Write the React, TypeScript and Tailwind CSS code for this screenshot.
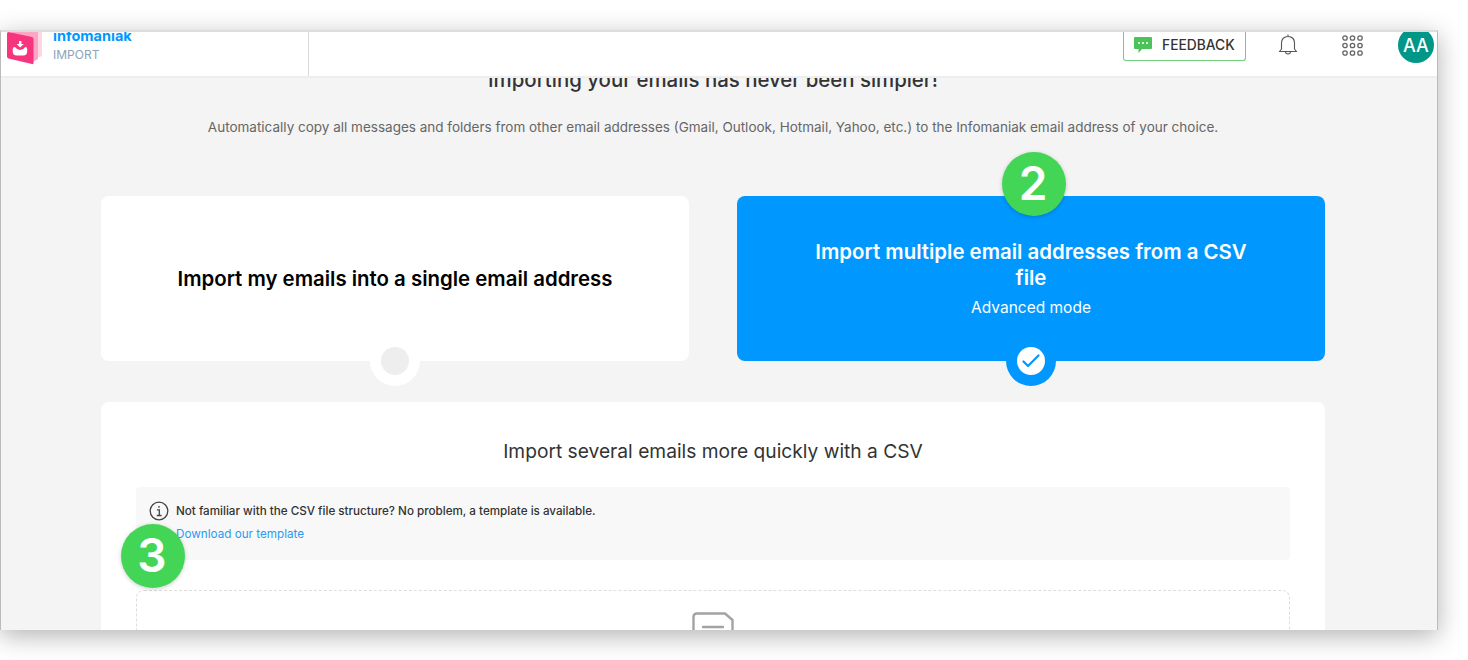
import React from "react";

function Logo() {
  return (
    <svg width="36" height="34" viewBox="0 0 36 34" className="block">
      <path d="M8 0 L35 0 L35 24 L27 27 Z" fill="#fdd8e4" />
      <path d="M4 0 L31 0 L31 27 L26 30 Z" fill="#fca6c3" />
      <path d="M1.500 0 L25 5 Q26.500 5.500 26.500 7 L26.500 31 Q26.500 32.500 25 32 L1.500 26.500 Q0 26 0 24.500 L0 1.500 Q0 0 1.500 0 Z" fill="#f7357f" />
      <path d="M12 9 h2.400 v3 h2.400 l-3.600 3.500 l-3.600 -3.500 h2.400 z" fill="#fff" />
      <path d="M8 15 q2 3 5.200 3 q3.200 0 5 -3 q2 0 2 2 v2 q0 4.500 -4 4.500 h-6.500 q-4 0 -4 -4.500 v-2 q0 -2 2.300 -2 z" fill="#fff" />
    </svg>
  );
}

function Bell() {
  return (
    <svg width="20" height="24" viewBox="0 0 20 24" fill="none" stroke="#555" strokeWidth="1.100" strokeLinejoin="round">
      <path d="M10 1.500 V3.500 M3.500 16 V10 C3.500 6 6 3.500 10 3.500 C14 3.500 16.500 6 16.500 10 V16 L18.500 18.500 H1.500 Z" />
      <path d="M7.500 18.500 C7.500 20.500 8.500 21 10 21 C11.500 21 12.500 20.500 12.500 18.500" />
    </svg>
  );
}

function Grid() {
  const dots = [3, 10.500, 18];
  return (
    <svg width="21" height="21" viewBox="0 0 21 21" fill="none" stroke="#666" strokeWidth="1.300">
      {dots.map((y) => dots.map((x) => <circle key={`${x}-${y}`} cx={x} cy={y} r="2.200" />))}
    </svg>
  );
}

function Chat() {
  return (
    <svg width="18" height="17" viewBox="0 0 18 17" className="block">
      <path d="M1 0 H17 Q18 0 18 1 V11 Q18 12 17 12 H8 L4.500 16 V12 H1 Q0 12 0 11 V1 Q0 0 1 0 Z" fill="#4cc25a" />
      <circle cx="5" cy="6" r="1" fill="#fff" />
      <circle cx="9" cy="6" r="1" fill="#fff" />
      <circle cx="13" cy="6" r="1" fill="#fff" />
    </svg>
  );
}

function Info() {
  return (
    <svg width="20" height="20" viewBox="0 0 20 20" fill="none" stroke="#444" className="block shrink-0">
      <circle cx="10" cy="10" r="8.800" strokeWidth="1.300" />
      <circle cx="10" cy="5.800" r="0.900" fill="#444" stroke="none" />
      <path d="M8 8.800 H10.300 V14.500 M7.800 14.500 H12.600" strokeWidth="1.300" />
    </svg>
  );
}

function Step({ n, className }: { n: string; className: string }) {
  return (
    <div className={`absolute z-20 flex h-16 w-16 items-center justify-center rounded-full bg-[#43d656] pr-[2px] pb-[2px] text-[46px] leading-none font-semibold text-white shadow-[0_1px_4px_rgba(0,0,0,0.2)] ${className}`}>
      {n}
    </div>
  );
}

export default function App() {
  return (
    <div className="h-[660px] w-[1468px] overflow-hidden bg-white pt-[30px] font-['Inter','Liberation_Sans',sans-serif]">
      <div className="relative flex h-[600px] w-[1438px] flex-col overflow-hidden border-t-2 border-r border-l border-t-[#dddddd] border-r-[#bbbbbb] border-l-[#bbbbbb] bg-[#f4f4f4] shadow-[0_6px_24px_rgba(0,0,0,0.3)]">
        <header className="z-10 flex h-[46px] shrink-0 items-stretch overflow-hidden border-b-2 border-[#eeeeee] bg-white">
          <div className="flex w-[308px] shrink-0 items-start gap-[10px] border-r border-[#d9d9d9] pl-[6px]">
            <Logo />
            <div className="-mt-[4px]">
              <div className="text-[14.500px] leading-[16px] font-bold text-[#0098ff]">infomaniak</div>
              <div className="mt-[3px] text-[12px] leading-[16px] text-[#8aa4b8]">IMPORT</div>
            </div>
          </div>
          <div className="flex flex-1 items-start justify-end">
            <div className="flex h-[29px] w-[123px] items-center gap-[10px] rounded-b-[3px] border-x border-b border-[#72cf7d] pb-[2px] pl-[10px] font-medium text-[#333333]">
              <Chat />
              <span className="text-[13.800px]">FEEDBACK</span>
            </div>
            <div className="mt-[1px] ml-[32px]">
              <Bell />
            </div>
            <div className="mt-[3px] ml-[44px]">
              <Grid />
            </div>
            <div className="-mt-[5px] mr-[3px] ml-[35px] flex h-9 w-9 items-center justify-center rounded-full bg-[#009688] text-[18px] font-medium text-white">
              AA
            </div>
          </div>
        </header>
        <main className="relative flex flex-1 flex-col overflow-hidden pr-[112px] pl-[100px]">
          <h1 className="-mt-[11px] text-center text-[20.400px] leading-[26px] font-medium text-[#333333]">
            Importing your emails has never been simpler!
          </h1>
          <p className="mt-[24px] text-center text-[13.500px] leading-[20px] whitespace-nowrap text-[#666666]">
            Automatically copy all messages and folders from other email addresses (Gmail, Outlook, Hotmail, Yahoo, etc.) to the Infomaniak email address of your choice.
          </p>
          <div className="mt-[59px] grid grid-cols-2 gap-[48px]">
            <div className="relative flex h-[165px] items-center justify-center rounded-[8px] bg-white pt-[1px]">
              <span className="text-[20.400px] font-semibold text-black">Import my emails into a single email address</span>
              <div className="absolute -bottom-[25px] left-1/2 flex h-[50px] w-[50px] -translate-x-1/2 items-center justify-center rounded-full bg-white">
                <div className="h-7 w-7 rounded-full bg-[#eeeeee]" />
              </div>
            </div>
            <div className="relative flex h-[165px] flex-col items-center justify-center rounded-[8px] bg-[#0098ff] px-[70px] pt-[2px] text-center text-white">
              <div className="text-[20.400px] leading-[26px] font-semibold">Import multiple email addresses from a CSV file</div>
              <div className="mt-[5px] text-[15.500px] leading-[24px]">Advanced mode</div>
              <div className="absolute -bottom-[25px] left-1/2 flex h-[50px] w-[50px] -translate-x-1/2 items-center justify-center rounded-full bg-[#0098ff]">
                <div className="flex h-7 w-7 items-center justify-center rounded-full bg-white">
                  <svg width="18" height="14" viewBox="0 0 18 14" fill="none" stroke="#0098ff" strokeWidth="2.200" strokeLinecap="round" strokeLinejoin="round">
                    <path d="M1.500 7.500 L6 12 L16.500 1.500" />
                  </svg>
                </div>
              </div>
            </div>
          </div>
          <section className="mt-[41px] rounded-t-[8px] bg-white px-[35px] pt-[34px] pb-[40px]">
            <h2 className="text-center text-[19.200px] leading-[30px] text-[#333333]">Import several emails more quickly with a CSV</h2>
            <div className="mt-[21px] flex h-[73px] gap-[7px] rounded-[4px] bg-[#f8f8f8] pt-[14px] pl-[13px]">
              <Info />
              <div>
                <div className="text-[11.650px] leading-[20px] font-medium text-[#333333]">Not familiar with the CSV file structure? No problem, a template is available.</div>
                <div className="mt-[2px] text-[11.700px] leading-[22px] text-[#2a9bf5]">Download our template</div>
              </div>
            </div>
            <div className="mt-[30px] flex h-[80px] justify-center rounded-[8px] border border-dashed border-[#dddddd] pt-[21px]">
              <svg width="42" height="40" viewBox="0 0 42 40" fill="none" stroke="#a3a3a3" strokeWidth="2.400" strokeLinejoin="round">
                <path d="M1.500 38 V5 Q1.500 1.500 5 1.500 H33 L40.500 8 V38 Z" />
                <path d="M11 15 H31" strokeLinecap="round" />
              </svg>
            </div>
          </section>
          <Step n="2" className="top-[74px] left-[1001px]" />
          <Step n="3" className="top-[446px] left-[120px]" />
        </main>
      </div>
    </div>
  );
}
